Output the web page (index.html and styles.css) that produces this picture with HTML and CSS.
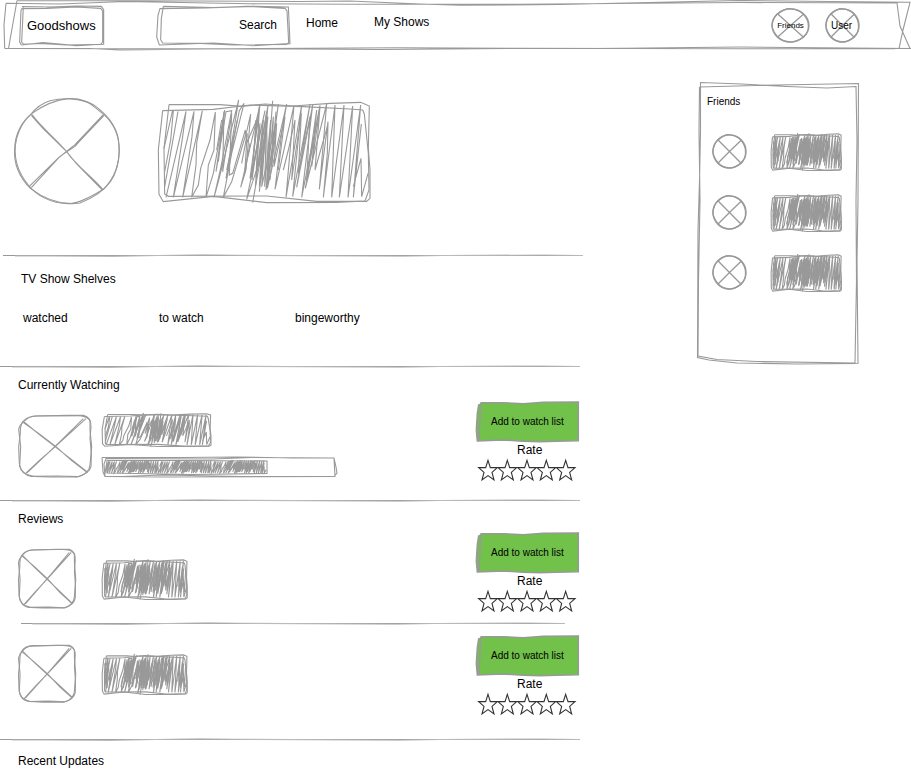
FILE: index.html
```html
<!DOCTYPE html>
<html lang="en">
<head>
<meta charset="utf-8">
<title>Goodshows</title>
<link rel="stylesheet" href="styles.css">
</head>
<body>
<svg class="defs" aria-hidden="true">
  <symbol id="frame" viewBox="24 30 642 312" preserveAspectRatio="none">
    <path d="M57 44H210L275 49L345 42L430 48L540 40L632 37L658 48L655 175L660 240V325L650 334L500 334L350 318L55 319L44 312L42 175L57 44"/>
    <path d="M38 62L190 58L300 45L460 50L600 57L638 60L643 72L655 190L657 300L645 333L560 337L350 338L190 319L40 335L27 313L25 180L38 62"/>
  </symbol>
  <symbol id="hatch" viewBox="24 30 642 312" preserveAspectRatio="none">
    <path d="M68 60L42 175M70 62L62 150L44 245M84 64L44 290M48 322L108 64L98 140L70 322L132 64L126 140L98 322L157 62L140 160L138 225L125 322L145 285L152 235L180 150L196 66L192 180L175 225L168 322L190 250L224 60L198 245L228 65L245 62L212 235L192 322L205 275L266 30L228 265L268 62L282 40L245 190L220 322L245 275L290 125L302 72L288 240L272 292L330 45L300 265L345 62L290 328L325 225L354 45L328 305L354 80L308 338M368 32L348 300L385 42L352 295L410 42L395 130L375 298L432 46L408 322L455 45L428 320L480 42L440 292L488 45L455 322L510 46L466 295L530 42L508 298L534 95L532 190L520 322L555 45L545 322L582 45L568 322L608 48L594 322L632 45L610 322L634 102M610 290L633 205L635 320L654 250"/>
    <path d="M205 215L222 65L218 245L245 70L238 255L248 250L286 120L290 160L320 90L310 200L328 50L318 260L350 65L335 290L375 110L360 270L378 65M400 240L415 180L435 90L425 270L454 70L445 250L480 80L470 270L500 60L485 230L510 50L495 240L532 110M340 120L325 230L345 140L332 270L350 100L352 240M200 180L215 90M230 240L262 90M275 220L292 130L284 250L300 160"/>
    <path d="M318 90L306 270L330 100L316 290L340 90L328 290L350 70L344 290L362 90L354 250L370 80L366 220L380 100L372 230L405 80L385 240"/>
  </symbol>
  <symbol id="hatch-fine" viewBox="24 30 642 312" preserveAspectRatio="none">
    <path d="M44 100L62 290L66 110L88 260M42 220L70 90L80 230L104 110M165 280L212 70L182 290L226 80L205 260L236 80L222 285L257 65L252 280L290 80L278 285L315 75L300 280L338 70M390 280L420 60L405 285L445 70L435 270L470 60L468 280L500 60L500 270L530 70L514 260L548 60M590 240L600 120L612 280L624 90L640 280L648 120"/>
  </symbol>
  <symbol id="avatar-large" viewBox="42 37 318 324" preserveAspectRatio="none">
    <path d="M96 86C130 62 165 46 205 42C245 40 268 52 285 68L312 90C345 120 358 160 358 200C355 270 330 320 240 355C190 362 140 348 92 312C60 280 40 240 44 190C46 150 60 115 96 86"/>
    <path d="M92 90C108 68 130 54 150 48C190 38 240 40 280 60C330 95 357 140 357 185C360 240 345 280 310 314C260 345 230 358 205 357C150 357 110 330 88 305C50 260 38 210 50 160C60 125 75 105 92 90"/>
    <path d="M96 90C125 130 165 160 200 201C230 245 275 275 308 314M94 92L128 130L200 201L230 238L308 317M310 90L225 180L175 220L88 305M312 92C285 122 250 155 225 185L180 215L94 309"/>
  </symbol>
  <symbol id="avatar" viewBox="0 0 36 36" preserveAspectRatio="none">
    <path d="M6 6Q11 1 18 1Q25 1 30 6Q35 11 35 18Q35 25 30 30Q24 35 18 35Q11 35 6 30Q1 25 1 18Q1 11 6 6"/>
    <path d="M6 6.500Q12 .5 18 .8Q26 1.500 30 6.500Q34.500 12 34.500 18Q35 25 29.500 30Q24 34.500 18 34.800Q11 34.500 6.500 30Q1.500 24 .8 18Q1.500 11 6 6"/>
    <path d="M6 6L18 18L30 30M30 6.500L19 17L6 30"/>
  </symbol>
  <symbol id="poster" viewBox="54 135 222 189" preserveAspectRatio="none">
    <path d="M72 154Q85 140 105 138L205 136L240 137Q264 140 270 152L270 180L275 230L270 285Q268 310 235 320L170 318L95 319Q65 315 59 287L62 230L56 178Q58 165 72 154"/>
    <path d="M66 158Q80 138 110 138L250 136Q274 142 273 170L270 205L274 250L273 290Q268 312 230 321L150 321L100 319Q60 312 58 280L56 230L61 190Q60 168 68 155"/>
    <path d="M68 156L120 193L168 230L215 272L262 308M72 156L120 195L168 232L262 306M258 146L215 185L160 235L120 270L76 311M250 146L180 215L82 308"/>
  </symbol>
  <symbol id="rule" viewBox="0 0 580 4" preserveAspectRatio="none">
    <path d="M0 2.500H580"/>
    <path class="faint" d="M12 3H45L110 3.400L155 2.500L200 1.700L235 2.300L400 3.200L440 2.500L540 2L580 2.500"/>
  </symbol>
  <symbol id="button" viewBox="48 36 309 123" preserveAspectRatio="none">
    <path class="fill" d="M62 38L130 38L190 41L250 37L355 36V152L290 154L240 155L190 154L130 150L52 153L49 120L52 70L56 45Z"/>
    <path class="edge" d="M62 38L130 38L190 41L250 37L355 36V152L290 154L240 155L190 154L130 150L52 153L49 120L52 70L56 45L62 44M62 38L60 90L56 152"/>
  </symbol>
  <symbol id="stars" viewBox="54 210 294 63">
    <g id="star-row">
      <path id="star" d="M84 211L91 233H112L96 247L102 270L84 257L66 270L72 247L56 233H77Z"/>
      <use href="#star" x="58"/><use href="#star" x="117"/><use href="#star" x="175"/><use href="#star" x="233"/>
    </g>
  </symbol>
</svg>

<header class="topbar">
  <svg class="outline" viewBox="0 0 911 50" preserveAspectRatio="none"><path d="M17 .5L8.500 48.500M6 3.300L4 25L4.700 48.500M6 3.300L60 4L125 1.500L250 3.800L350 4.300H520L740 2.500L897 3L900 26L910 48.500M17 .7H130L300 1.500L350 1L420 4L460 5.300L560 4.500L740 .5L830 1.500L910 2.300L903 30L899 48.500M4.700 48.500H90L120 50L260 48.500L400 47.800L600 48.500L740 47L850 48L911 48.500M8 48.500L300 49L380 49.500L520 48.300L740 48.800H895"/></svg>
  <a class="brand"><svg class="outline" viewBox="58 17 258 120" preserveAspectRatio="none"><path d="M67 19L150 20L230 17L305 18L312 28V132L230 136L130 127L65 134L60 125L64 30L67 25L140 24L230 20L303 24L309 32V125L303 132L200 134L120 129L72 132L66 125L71 20"/></svg><span>Goodshows</span></a>
  <div class="search"><svg class="outline" viewBox="468 17 405 120" preserveAspectRatio="none"><path d="M490 18L640 22L760 18L865 20L867 60L870 130L760 136L640 128L478 134L470 110L474 45L480 25L620 23L740 18L855 24L861 32L866 126L860 132L700 134L600 129L488 128L482 118L484 55L490 18"/></svg><span>Search</span></div>
  <nav class="nav"><a>Home</a><a class="shows">My Shows</a></nav>
  <a class="round friends-link"><svg class="outline avatar"><use href="#avatar"/></svg><span>Friends</span></a>
  <a class="round user-link"><svg class="outline avatar"><use href="#avatar"/></svg><span>User</span></a>
</header>

<div class="page">
  <main class="content">
    <section class="profile">
      <svg class="portrait"><use href="#avatar-large"/></svg>
      <svg class="bio"><use href="#frame"/><use href="#hatch"/></svg>
    </section>
    <svg class="rule rule-top"><use href="#rule"/></svg>
    <section class="shelves">
      <h2>TV Show Shelves</h2>
      <ul><li>watched</li><li>to watch</li><li>bingeworthy</li></ul>
    </section>
    <svg class="rule"><use href="#rule"/></svg>
    <section class="shows-list">
      <h2>Currently Watching</h2>
      <div class="show watching">
        <svg class="thumb"><use href="#poster"/></svg>
        <div class="info">
          <svg class="summary"><use href="#frame"/><use href="#hatch"/></svg>
          <svg class="progress" viewBox="0 0 235 22"><path d="M0 1.500H80L135 1L190 2H232L234 11L235 17L232 20.500H140L60 19L20 20.500H3L1 16L0 1.500M3 20.500L2 8L4 2.500L110 3L150 1.500L232 2L233 20.500L60 21L3 20.500M5 4.500L80 4.500L165 5V17.500L90 18.500L5 17ZM5 5L3 18"/><svg x="3" y="4" width="56" height="14"><use href="#hatch"/></svg><svg x="56" y="4" width="56" height="14"><use href="#hatch"/></svg><svg x="109" y="4" width="56" height="14"><use href="#hatch"/></svg></svg>
        </div>
        <div class="actions">
          <button><svg class="outline"><use href="#button"/></svg><span>Add to watch list</span></button>
          <span class="rate">Rate</span>
          <svg class="stars"><use href="#stars"/></svg>
        </div>
      </div>
    </section>
    <svg class="rule"><use href="#rule"/></svg>
    <section class="shows-list">
      <h2>Reviews</h2>
      <div class="show first-review">
        <svg class="thumb"><use href="#poster"/></svg>
        <div class="info"><svg class="summary"><use href="#frame"/><use href="#hatch"/><use href="#hatch-fine"/></svg></div>
        <div class="actions">
          <button><svg class="outline"><use href="#button"/></svg><span>Add to watch list</span></button>
          <span class="rate">Rate</span>
          <svg class="stars"><use href="#stars"/></svg>
        </div>
      </div>
      <svg class="rule rule-inner"><use href="#rule"/></svg>
      <div class="show second-review">
        <svg class="thumb"><use href="#poster"/></svg>
        <div class="info"><svg class="summary"><use href="#frame"/><use href="#hatch"/><use href="#hatch-fine"/></svg></div>
        <div class="actions">
          <button><svg class="outline"><use href="#button"/></svg><span>Add to watch list</span></button>
          <span class="rate">Rate</span>
          <svg class="stars"><use href="#stars"/></svg>
        </div>
      </div>
    </section>
    <svg class="rule"><use href="#rule"/></svg>
    <section class="updates"><h2>Recent Updates</h2></section>
  </main>

  <aside class="friends">
    <svg class="outline" viewBox="0 0 162 285" preserveAspectRatio="none"><path d="M2.500 6L80 4L161.500 2.500L161 120L160 180L161 283.500L100 284L40 283L12 280L.5 277.500L1 150L2.500 100L3.500 50L3.500 1.500L45 3L90 5.500L130 7L159 5.500L160 60L159 120L159.500 200L158 283L60 281.500L20 279.500L1 276L1.500 200L3 120L2 50L2.500 6"/></svg>
    <h3>Friends</h3>
    <ul>
      <li><svg class="face avatar"><use href="#avatar"/></svg><svg class="note"><use href="#frame"/><use href="#hatch"/><use href="#hatch-fine"/></svg></li>
      <li><svg class="face avatar"><use href="#avatar"/></svg><svg class="note"><use href="#frame"/><use href="#hatch"/><use href="#hatch-fine"/></svg></li>
      <li><svg class="face avatar"><use href="#avatar"/></svg><svg class="note"><use href="#frame"/><use href="#hatch"/><use href="#hatch-fine"/></svg></li>
    </ul>
  </aside>
</div>
</body>
</html>
```
FILE: styles.css
```css
* { box-sizing: border-box; }
body {
  margin: 0;
  width: 911px;
  height: 777px;
  overflow: hidden;
  background: #fff;
  color: #000;
  font: 12px/14px "Liberation Sans", Arial, sans-serif;
}
h2, h3, ul { margin: 0; padding: 0; font-weight: normal; list-style: none; }
h2 { font-size: 12px; line-height: 14px; }
svg { display: block; flex: none; overflow: visible; fill: none; stroke: #999; stroke-width: 1.1; }
symbol { overflow: visible; }
path { vector-effect: non-scaling-stroke; }
.defs { position: absolute; width: 0; height: 0; }
.outline { position: absolute; inset: 0; width: 100%; height: 100%; }
.avatar { stroke-width: 1.3; }
.faint { stroke: #bbb; }
.fill { fill: #71c14b; stroke: none; }
.edge { stroke-width: 1.5; }
#star { stroke: #333; }

.topbar { position: relative; display: flex; align-items: flex-start; height: 50px; padding-left: 19px; }
.brand, .search, .round { position: relative; flex: none; }
.brand span, .search span, .round span, .actions button span { position: relative; display: block; white-space: nowrap; }
.brand { width: 86px; height: 40px; margin-top: 6px; padding: 12px 0 0 8px; font-size: 13px; line-height: 15px; }
.search { width: 135px; height: 40px; margin: 6px 0 0 51px; padding: 12px 14px 0 0; text-align: right; }
.nav { display: flex; align-items: flex-start; width: 480px; padding: 16px 0 0 15px; }
.shows { margin: -1px 0 0 36px; }
.round { display: flex; justify-content: center; height: 35px; margin-top: 8px; text-align: center; }
.friends-link { width: 39px; padding-top: 11px; font-size: 8px; }
.user-link { width: 35px; margin-left: 15px; padding: 11px 2px 0 0; font-size: 10px; }

.page { display: flex; align-items: flex-start; }
.content { width: 582px; }
.profile { display: flex; height: 203px; padding-left: 14px; }
.portrait { width: 106px; height: 108px; margin-top: 47px; }
.bio { width: 214px; height: 104px; margin: 50px 0 0 38px; }
.rule { width: 580px; height: 4px; }
.rule-top { margin-left: 3px; }
.rule-inner { width: 544px; margin-left: 21px; }
.shelves { height: 107px; padding: 15px 0 0 21px; }
.shelves ul { display: grid; grid-template-columns: repeat(3, 136px); margin-top: 25px; padding-left: 2px; }
.shows-list { padding-top: 10px; }
.shows-list h2, .updates h2 { padding-left: 18px; }
.updates { padding-top: 13px; }

.show { display: grid; grid-template-columns: 84px 374px 103px; align-items: start; padding-left: 18px; }
.watching { height: 106px; }
.watching .thumb { width: 74px; height: 63px; margin-top: 23px; }
.watching .info { padding-top: 21px; }
.watching .actions { padding-top: 10px; }
.watching .summary { width: 110px; height: 34px; }
.progress { width: 235px; height: 22px; margin-top: 9px; }
.first-review { height: 95px; }
.second-review { height: 112px; }
.first-review .thumb { width: 58px; height: 60px; margin-top: 23px; }
.second-review .thumb { width: 58px; height: 58px; margin-top: 20px; }
.first-review .info { padding-top: 33px; }
.second-review .info { padding-top: 29px; }
.first-review .summary, .second-review .summary { width: 86px; height: 41px; }
.first-review .actions { padding-top: 7px; }
.second-review .actions { padding-top: 11px; }
.actions button { position: relative; display: block; width: 103px; height: 41px; padding: 0 0 1px 15px; border: 0; background: none; color: #000; text-align: left; font: 10px/12px "Liberation Sans", Arial, sans-serif; }
.rate { display: block; margin-left: 41px; }
.stars { width: 98px; height: 21px; margin: 3px 0 0 2px; }

.friends { position: relative; width: 162px; height: 284px; margin: 31px 0 0 115px; padding: 15px 0 0 10px; }
.friends h3 { font-size: 10px; line-height: 12px; }
.friends ul { padding: 25px 0 0 5px; }
.friends li { display: flex; height: 38px; margin-bottom: 23px; }
.friends li:last-child { margin-top: -1px; }
.face { width: 35px; height: 35px; margin-top: 1px; }
.note { width: 71px; height: 38px; margin-left: 24px; }
```
